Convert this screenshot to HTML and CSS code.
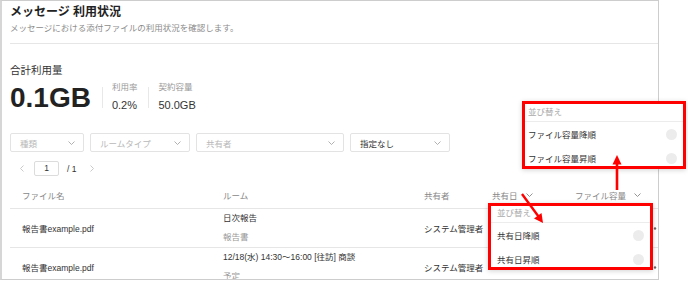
FILE: index.html
```html
<html>
	<head>
		<title>メッセージ 利用状況</title>
<link rel="stylesheet" href="styles.css">
	</head>
	<body>
		<div class="page">
			<div class="panel">
				<div class="head">
					<h1 class="title">メッセージ 利用状況</h1>
					<p class="subtitle">メッセージにおける添付ファイルの利用状況を確認します。</p>
				</div>
				<div class="usage">
					<div class="usage_label">合計利用量</div>
					<div class="usage_row">
						<div class="usage_total">0.1GB</div>
						<div class="usage_sep"></div>
						<div class="stat">
							<span class="stat_label">利用率</span>
							<span class="stat_value">0.2%</span>
						</div>
						<div class="usage_sep"></div>
						<div class="stat">
							<span class="stat_label">契約容量</span>
							<span class="stat_value">50.0GB</span>
						</div>
					</div>
				</div>
				<div class="filters">
					<div class="select w_type"><span class="placeholder">種類</span><svg width="7" height="4" viewBox="0 0 7 4"><path d="M0.5 0.5 L3.5 3.5 L6.5 0.5" fill="none" stroke="#a8a8a8" stroke-width="0.9"/></svg></div>
					<div class="select w_room"><span class="placeholder">ルームタイプ</span><svg width="7" height="4" viewBox="0 0 7 4"><path d="M0.5 0.5 L3.5 3.5 L6.5 0.5" fill="none" stroke="#a8a8a8" stroke-width="0.9"/></svg></div>
					<div class="select w_user"><span class="placeholder">共有者</span><svg width="7" height="4" viewBox="0 0 7 4"><path d="M0.5 0.5 L3.5 3.5 L6.5 0.5" fill="none" stroke="#a8a8a8" stroke-width="0.9"/></svg></div>
					<div class="select w_term"><span>指定なし</span><svg width="7" height="4" viewBox="0 0 7 4"><path d="M0.5 0.5 L3.5 3.5 L6.5 0.5" fill="none" stroke="#a8a8a8" stroke-width="0.9"/></svg></div>
				</div>
				<div class="pager">
					<svg class="pager_arrow" width="4" height="7" viewBox="0 0 4 7"><path d="M3.5 0.5 L0.5 3.5 L3.5 6.5" fill="none" stroke="#c4c4c4" stroke-width="0.9"/></svg>
					<div class="pager_box">1</div>
					<span class="pager_total">/ 1</span>
					<svg class="pager_arrow" width="4" height="7" viewBox="0 0 4 7"><path d="M0.5 0.5 L3.5 3.5 L0.5 6.5" fill="none" stroke="#c4c4c4" stroke-width="0.9"/></svg>
				</div>
				<div class="table">
					<div class="row row_head">
						<div class="cell">ファイル名</div>
						<div class="cell">ルーム</div>
						<div class="cell">共有者</div>
						<div class="cell">共有日<svg class="sort" width="7" height="4" viewBox="0 0 7 4"><path d="M0.5 0.5 L3.5 3.5 L6.5 0.5" fill="none" stroke="#888" stroke-width="0.9"/></svg></div>
						<div class="cell">ファイル容量<svg class="sort" width="7" height="4" viewBox="0 0 7 4"><path d="M0.5 0.5 L3.5 3.5 L6.5 0.5" fill="none" stroke="#888" stroke-width="0.9"/></svg></div>
					</div>
					<div class="row">
						<div class="cell">報告書example.pdf</div>
						<div class="cell cell_two">
							<span>日次報告</span>
							<span class="sub">報告書</span>
						</div>
						<div class="cell">システム管理者</div>
						<div class="cell"></div>
						<div class="cell cell_end"><svg width="14" height="3" viewBox="0 0 14 3"><circle cx="2" cy="1.5" r="1.2" fill="#666"/><circle cx="7" cy="1.5" r="1.2" fill="#666"/><circle cx="12" cy="1.5" r="1.2" fill="#666"/></svg></div>
					</div>
					<div class="row">
						<div class="cell">報告書example.pdf</div>
						<div class="cell cell_two">
							<span>12/18(水) 14:30〜16:00 [往訪] 商談</span>
							<span class="sub">予定</span>
						</div>
						<div class="cell">システム管理者</div>
						<div class="cell"></div>
						<div class="cell cell_end"><svg width="14" height="3" viewBox="0 0 14 3"><circle cx="2" cy="1.5" r="1.2" fill="#666"/><circle cx="7" cy="1.5" r="1.2" fill="#666"/><circle cx="12" cy="1.5" r="1.2" fill="#666"/></svg></div>
					</div>
				</div>
			</div>

			<div class="popup popup_size">
				<div class="popup_head">並び替え</div>
				<div class="popup_item"><span>ファイル容量降順</span><i class="radio"></i></div>
				<div class="popup_item"><span>ファイル容量昇順</span><i class="radio"></i></div>
			</div>
			<div class="popup popup_date">
				<div class="popup_head">並び替え</div>
				<div class="popup_item"><span>共有日降順</span><i class="radio"></i></div>
				<div class="popup_item"><span>共有日昇順</span><i class="radio"></i></div>
			</div>

			<svg class="arrows" width="688" height="281" viewBox="0 0 688 281">
				<line x1="617" y1="190" x2="617" y2="162" stroke="#f00" stroke-width="2.6"/>
				<polygon points="617,155 612.5,164.5 621.5,164.5" fill="#f00"/>
				<line x1="522" y1="194" x2="538.5" y2="216.5" stroke="#f00" stroke-width="2.4"/>
				<polygon points="543,223 534,218.5 541.5,213" fill="#f00"/>
			</svg>
		</div>
	</body>
</html>
```

FILE: styles.css
```css
body	{
	margin: 0;
	background: white;
	font-family: "Liberation Sans", "Noto Sans CJK JP", sans-serif;
	color: #333;
}
.page	{
	position: relative;
	width: 688px;
	height: 281px;
	overflow: hidden;
}
.panel	{
	box-sizing: border-box;
	width: 659px;
	height: 280px;
	padding-left: 8px;
	border: 1px solid #cdcdcd;
	border-left: 2px solid #d6d6d6;
	overflow: hidden;
}
.head	{
	padding: 3px 0 9px 0;
	border-bottom: 1px solid #e6e6e6;
}
.title	{
	margin: 0;
	font-size: 12px;
	line-height: 16px;
	font-weight: bold;
	color: #222;
}
.subtitle	{
	margin: 2px 0 0 0;
	font-size: 8.5px;
	line-height: 12px;
	color: #8c8c8c;
}
.usage_label	{
	margin-top: 19px;
	font-size: 10.5px;
	line-height: 14px;
	color: #333;
}
.usage_row	{
	display: flex;
	align-items: flex-start;
	margin-top: 7px;
}
.usage_total	{
	font-size: 28px;
	line-height: 28px;
	font-weight: bold;
	color: #222;
}
.usage_sep	{
	width: 1px;
	height: 21px;
	margin: 3px 9px 0 11px;
	background: #e8e8e8;
}
.stat	{
	display: flex;
	flex-direction: column;
	margin-top: -2px;
}
.stat_label	{
	font-size: 8.5px;
	line-height: 11px;
	color: #999;
}
.stat_value	{
	margin-top: 5px;
	font-size: 11px;
	line-height: 14px;
	color: #333;
}
.filters	{
	display: flex;
	gap: 6px;
	margin-top: 21px;
}
.select	{
	box-sizing: border-box;
	display: flex;
	align-items: center;
	justify-content: space-between;
	height: 19px;
	padding: 0 8px 0 9px;
	border: 1px solid #e3e3e3;
	border-radius: 2px;
	font-size: 8.5px;
	color: #333;
}
.placeholder	{
	color: #b8b8b8;
}
.w_type	{
	width: 74px;
}
.w_room	{
	width: 100px;
}
.w_user	{
	width: 148px;
}
.w_term	{
	width: 100px;
}
.pager	{
	display: flex;
	align-items: center;
	margin-top: 9px;
	padding-left: 10px;
	height: 15px;
	font-size: 8.5px;
	color: #333;
}
.pager_box	{
	box-sizing: border-box;
	width: 25px;
	height: 15px;
	margin: 0 8px 0 10px;
	border: 1px solid #dcdcdc;
	border-radius: 2px;
	text-align: center;
	line-height: 13px;
}
.pager_total	{
	margin-right: 14px;
}
.table	{
	margin-top: 6px;
}
.row	{
	display: grid;
	grid-template-columns: 201px 201px 68px 83px 1fr;
	height: 38px;
	border-bottom: 1px solid #e6e6e6;
	font-size: 8.5px;
	color: #333;
}
.row_head	{
	height: 26px;
	color: #888;
}
.cell	{
	display: flex;
	align-items: center;
	padding-left: 12px;
	white-space: nowrap;
}
.cell_two	{
	flex-direction: column;
	align-items: flex-start;
	justify-content: center;
	line-height: 19px;
}
.sub	{
	color: #999;
}
.cell_end	{
	justify-content: flex-end;
	padding-right: 1px;
}
.sort	{
	margin-left: 8px;
}
.popup	{
	position: absolute;
	box-sizing: border-box;
	width: 164px;
	height: 68px;
	border: 3px solid #f00;
	background: white;
	box-shadow: 0 1px 5px rgba(0, 0, 0, 0.18);
	overflow: hidden;
	font-size: 8.5px;
}
.popup_size	{
	left: 522px;
	top: 101px;
	padding: 0 6px 0 3px;
}
.popup_date	{
	left: 488px;
	top: 203px;
	width: 165px;
	height: 67px;
	padding: 0 6px;
}
.popup_head	{
	height: 16px;
	line-height: 15px;
	border-bottom: 1px solid #ececec;
	margin: 0 -6px 0 -6px;
	padding-left: 6px;
	color: #aaa;
}
.popup_size .popup_head	{
	height: 17px;
	line-height: 17px;
	margin-left: -3px;
	padding-left: 3px;
}
.popup_item	{
	display: flex;
	align-items: center;
	justify-content: space-between;
	height: 24px;
	color: #333;
}
.radio	{
	width: 11px;
	height: 11px;
	border-radius: 50%;
	background: #ececec;
}
.arrows	{
	position: absolute;
	left: 0;
	top: 0;
}
```
